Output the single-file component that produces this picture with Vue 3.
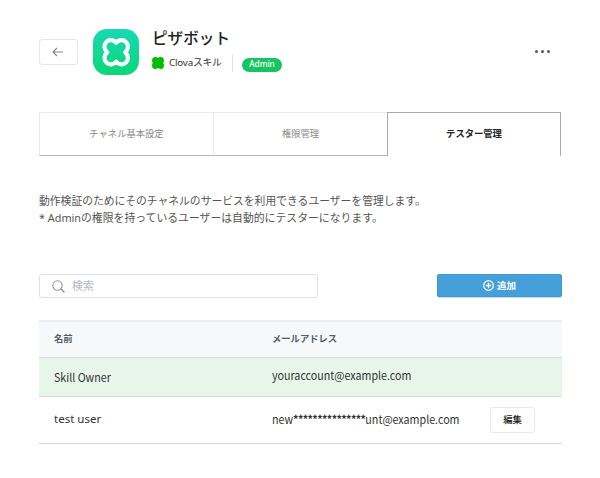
<script setup>
const tabs = [
  { label: 'チャネル基本設定', active: false },
  { label: '権限管理', active: false },
  { label: 'テスター管理', active: true },
]
</script>

<template>
  <main class="page">
    <header class="head">
      <button class="back" aria-label="戻る">
        <svg width="12" height="10" viewBox="0 0 12 10"><path d="M11 5H1M5 1L1 5l4 4" fill="none" stroke="#888" stroke-width="1.1" /></svg>
      </button>
      <svg class="logo" width="46" height="46" viewBox="0 0 46 46">
        <defs>
          <linearGradient id="logo-fill" x1="0" y1="0" x2="0" y2="1">
            <stop offset="0" stop-color="#17d9b5" />
            <stop offset="1" stop-color="#0bd777" />
          </linearGradient>
        </defs>
        <rect width="46" height="46" rx="14" fill="url(#logo-fill)" />
        <path d="M23.2 13.8C25.4 10.6 30.2 10.1 33 12.9C35.8 15.8 35.5 20.5 32.2 23.3C35.5 26.1 35.8 30.7 33 33.5C30.2 36.3 25.4 35.8 23.2 32.6C21 35.8 16.2 36.3 13.4 33.5C10.6 30.7 10.9 26.1 14.2 23.3C10.9 20.5 10.6 15.8 13.4 12.9C16.2 10.1 21 10.6 23.2 13.8Z" fill="none" stroke="#fff" stroke-width="4.2" stroke-linejoin="round" />
      </svg>
      <div class="info">
        <h1 class="title">ピザボット</h1>
        <div class="meta">
          <svg width="12" height="12" viewBox="0 0 12 12"><path d="M6 .9C7-.2 10-.2 11 .8C12.2 2 12.2 4.5 11.3 6C12.2 7.5 12.2 10 11 11.2C10 12.2 7 12.2 6 11.1C5 12.2 2 12.2 1 11.2C-.2 10-.2 7.5.7 6C-.2 4.5-.2 2 1 .8C2-.2 5-.2 6 .9Z" fill="#00bd00" /></svg>
          <span class="kind">Clovaスキル</span>
          <span class="divider"></span>
          <span class="role">Admin</span>
        </div>
      </div>
      <div class="more"><i></i><i></i><i></i></div>
    </header>

    <nav class="tabs">
      <div v-for="tab in tabs" :key="tab.label" class="tab" :class="{ active: tab.active }">{{ tab.label }}</div>
    </nav>

    <div class="description">
      <p>動作検証のためにそのチャネルのサービスを利用できるユーザーを管理します。</p>
      <p class="note">* Adminの権限を持っているユーザーは自動的にテスターになります。</p>
    </div>

    <div class="tools">
      <div class="search">
        <svg width="13" height="13" viewBox="0 0 13 13"><circle cx="5.5" cy="5.5" r="4.7" fill="none" stroke="#999" stroke-width="1.1" /><path d="M8.9 8.9L12.4 12.3" stroke="#888" stroke-width="1.3" /></svg>
        <span>検索</span>
      </div>
      <button class="add">
        <svg width="11" height="11" viewBox="0 0 11 11"><circle cx="5.5" cy="5.5" r="4.8" fill="none" stroke="#fff" stroke-width="1.2" /><path d="M5.5 2.8v5.4M2.8 5.5h5.4" stroke="#fff" stroke-width="1.4" /></svg>
        <span>追加</span>
      </button>
    </div>

    <section class="table">
      <div class="row header"><span>名前</span><span>メールアドレス</span></div>
      <div class="row owner"><span class="narrow owner-name">Skill Owner</span><span class="narrow owner-mail">youraccount@example.com</span></div>
      <div class="row user">
        <span class="user-name">test user</span>
        <span class="narrow user-mail">new<span class="mask">***************</span>unt@example.com</span>
        <button class="edit">編集</button>
      </div>
    </section>
  </main>
</template>

<style>
body { margin: 0; background: #fff; }
</style>

<style scoped>
* { box-sizing: border-box; }
.page { width: 600px; height: 478px; padding: 29px 38px 0 39px; background: #fff; font-family: "Noto Sans CJK JP", "Noto Sans", sans-serif; color: #333; overflow: hidden; white-space: nowrap; }
button { font-family: inherit; padding: 0; margin: 0; }
svg { display: block; flex: none; }
.head { display: flex; height: 46px; align-items: flex-start; }
.back { width: 39px; height: 26px; margin-top: 10px; border: 1px solid #e3e7ef; border-radius: 3px; background: #fff; display: flex; align-items: center; justify-content: center; padding-right: 1px; }
.logo { margin-left: 15px; }
.info { margin-left: 13px; }
.title { margin: -2px 0 0; font-size: 15.6px; line-height: 20px; font-weight: 500; color: #222; }
.meta { display: flex; align-items: center; height: 18px; margin-top: 7px; }
.kind { margin: -1px 0 0 5px; width: 63px; font-family: "Noto Sans", "Noto Sans CJK JP", sans-serif; font-size: 9.8px; line-height: 16px; letter-spacing: -0.2px; }
.divider { width: 1px; height: 17px; background: #dfe3e6; }
.role { margin: 3px 0 0 9px; width: 40px; height: 14px; border-radius: 7px; background: #16c464; color: #fff; font: 500 8.2px/12px "Noto Sans", sans-serif; text-align: center; }
.more { display: flex; gap: 2.6px; margin: 21px 12.5px 0 auto; }
.more i { width: 3px; height: 3px; border-radius: 50%; background: #4c5a66; }
.tabs { display: grid; grid-template-columns: 174px 174px 174px; height: 44px; margin-top: 37px; }
.tab { border-top: 1px solid #e8ebf1; border-left: 1px solid #e8ebf1; border-bottom: 1px solid #b3b3b3; display: flex; align-items: center; justify-content: center; font-size: 9.3px; color: #888; padding-bottom: 2px; }
.tab.active { border: 1px solid #aaa; border-bottom: 0; padding-bottom: 3px; color: #222; font-weight: 700; }
.description { margin-top: 36px; font-size: 10.8px; line-height: 17px; color: #555; }
.description p { margin: 0; }
.description .note { font-family: "Noto Sans", "Noto Sans CJK JP", sans-serif; font-size: 10.85px; }
.tools { display: flex; justify-content: space-between; margin-top: 48px; }
.search { width: 279px; height: 24px; border: 1px solid #e0e2e6; border-radius: 3px; display: flex; align-items: center; padding-left: 12px; font-size: 11px; color: #b0bac2; }
.search span { margin: -3px 0 0 7px; }
.add { width: 125px; height: 23px; border: 1px solid #389adb; border-radius: 2px; background: #459fd8; color: #fff; display: flex; align-items: center; justify-content: center; gap: 3px; font-size: 9.5px; font-weight: 700; box-shadow: 0 1px 1px #ccd6e1; }
.add span { margin-top: -1px; }
.table { margin-top: 22px; border-top: 2px solid #eaedf1; }
.row { display: grid; grid-template-columns: 218px 218px 1fr; align-items: center; padding-left: 15px; border-bottom: 1px solid #d5dadd; }
.header { height: 36px; padding-bottom: 3px; background: #f7f8fa; font-size: 9.3px; font-weight: 700; color: #536069; }
.narrow { transform: scaleX(.93); transform-origin: left center; }
.owner { height: 39px; background: #e8f5eb; font-size: 11.5px; }
.owner-name { padding-top: 0; }
.owner-mail { padding-bottom: 4px; }
.user { height: 47px; font-size: 11.5px; }
.user-name { font-family: "Noto Sans", sans-serif; font-size: 11.5px; padding-bottom: 3px; }
.user-mail { padding-bottom: 3px; }
.mask { letter-spacing: -0.65px; font-weight: 700; }
.edit { width: 45px; height: 26px; padding-bottom: 2px; border: 1px solid #e6e9f3; border-radius: 3px; background: #fff; color: #222; font-size: 9.3px; font-weight: 500; }
</style>
